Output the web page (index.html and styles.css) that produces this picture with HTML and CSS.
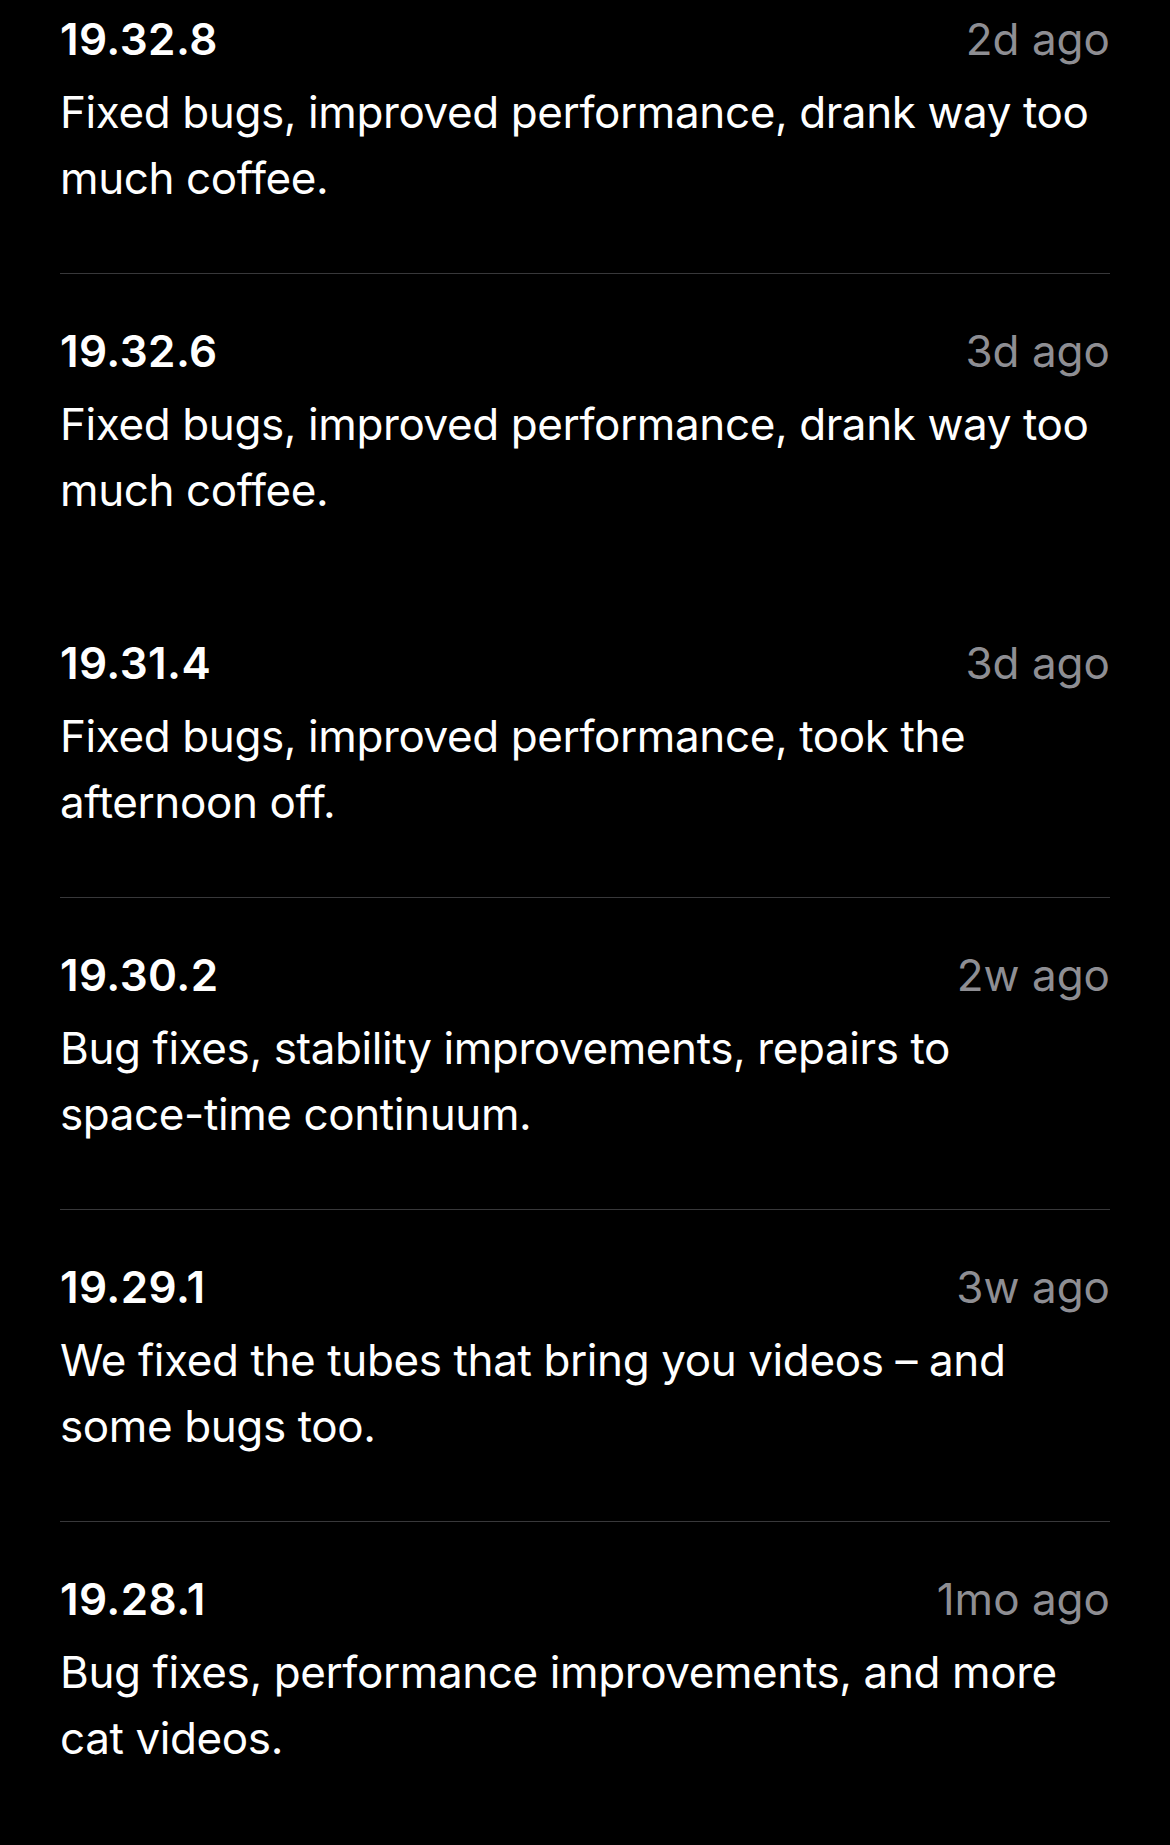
FILE: index.html
```html
<!DOCTYPE html>
<html lang="en">
<head>
  <meta charset="UTF-8">
  <title>Version History</title>
  <link rel="stylesheet" href="styles.css">
</head>
<body>
  <div class="history">
    <div class="entry">
      <div class="entry-head">
        <span class="version">19.32.8</span>
        <span class="when">2d ago</span>
      </div>
      <p class="notes">Fixed bugs, improved performance, drank way too much coffee.</p>
    </div>
    <div class="entry no-rule">
      <div class="entry-head">
        <span class="version">19.32.6</span>
        <span class="when">3d ago</span>
      </div>
      <p class="notes">Fixed bugs, improved performance, drank way too much coffee.</p>
    </div>
    <div class="entry">
      <div class="entry-head">
        <span class="version">19.31.4</span>
        <span class="when">3d ago</span>
      </div>
      <p class="notes">Fixed bugs, improved performance, took the afternoon off.</p>
    </div>
    <div class="entry">
      <div class="entry-head">
        <span class="version">19.30.2</span>
        <span class="when">2w ago</span>
      </div>
      <p class="notes">Bug fixes, stability improvements, repairs to <span class="nowrap">space-time</span> continuum.</p>
    </div>
    <div class="entry">
      <div class="entry-head">
        <span class="version">19.29.1</span>
        <span class="when">3w ago</span>
      </div>
      <p class="notes">We fixed the tubes that bring you videos – and some bugs too.</p>
    </div>
    <div class="entry">
      <div class="entry-head">
        <span class="version">19.28.1</span>
        <span class="when">1mo ago</span>
      </div>
      <p class="notes">Bug fixes, performance improvements, and more cat videos.</p>
    </div>
  </div>
</body>
</html>
```

FILE: styles.css
```css
body {
  margin: 0;
  background: #000;
  color: #fff;
  font-family: Inter, "Noto Sans", sans-serif;
  font-size: 44px;
  line-height: 66px;
}
.history { padding: 0 60px; }
.entry {
  padding: 44px 0 62px;
  border-bottom: 1px solid #38383a;
}
/* list is scrolled, the first row is cut at the top */
.entry:first-child { padding-top: 6px; }
.entry:last-child,
.entry.no-rule { border-bottom-color: transparent; }
.entry-head {
  display: flex;
  justify-content: space-between;
  align-items: baseline;
}
.version {
  font-weight: 600;
  letter-spacing: 0.4px;
}
.when { color: #8e8e93; }
.notes {
  margin: 7px 0 0;
  letter-spacing: -0.4px;
}
.nowrap { white-space: nowrap; }
```
